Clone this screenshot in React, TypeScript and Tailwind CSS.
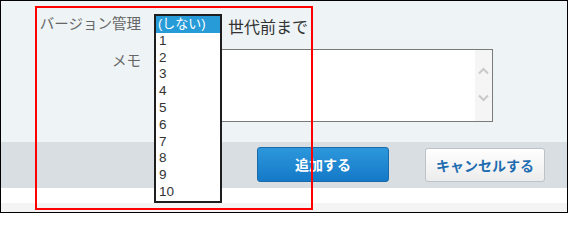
import React from "react";

const items = ["1", "2", "3", "4", "5", "6", "7", "8", "9", "10"];

export default function App() {
  return (
    <div
      className="relative flex h-[213px] w-[568px] flex-col overflow-hidden border border-black bg-[#eef3f6]"
      style={{ fontFamily: '"Noto Sans CJK JP", "Noto Sans", sans-serif' }}
    >
      <div className="flex h-[141px] flex-col">
        <div className="flex h-[48px] items-start pt-[12px]">
          <div className="w-[140px] text-right text-[14.5px] leading-[20px] text-[#666]">
            バージョン管理
          </div>
          <div className="ml-[15px] h-[20px] w-[66px]" />
          <span className="ml-[6px] mt-[2px] text-[16px] leading-[22px] text-[#333]">
            世代前まで
          </span>
        </div>
        <div className="flex items-start">
          <div className="w-[140px] pt-[1px] text-right text-[14.5px] leading-[20px] text-[#666]">
            メモ
          </div>
          <div className="ml-[15px] flex h-[73px] w-[337px] border border-[#7a7a7a] bg-white">
            <textarea className="flex-1 resize-none bg-white outline-none" />
            <div className="flex w-[17px] flex-col items-center bg-[#f5f5f5] pt-[17px]">
              <svg width="11" height="8" viewBox="0 0 11 8" fill="none">
                <path d="M1 6.5 L5.5 2 L10 6.5" stroke="#c9c9c9" strokeWidth="2" />
              </svg>
              <svg className="mt-[19px]" width="11" height="8" viewBox="0 0 11 8" fill="none">
                <path d="M1 1.5 L5.5 6 L10 1.5" stroke="#c9c9c9" strokeWidth="2" />
              </svg>
            </div>
          </div>
        </div>
      </div>
      <div className="flex h-[46px] items-start bg-[#d9dee2] pt-[5px]">
        <button className="ml-[256px] h-[35px] w-[132px] rounded-[3px] border border-[#1b6aa8] bg-gradient-to-b from-[#2c97db] to-[#1479c8] text-[14px] font-bold text-white">
          追加する
        </button>
        <button className="ml-[36px] mt-[1px] h-[34px] w-[120px] rounded-[3px] border border-[#bcc2c7] bg-gradient-to-b from-white to-[#ececec] text-[14px] font-bold text-[#1d6cb0]">
          キャンセルする
        </button>
      </div>
      <div className="h-[15px] bg-white" />
      <div className="flex-1 bg-[#f4f4f4]" />

      <div
        className="absolute left-[153px] top-[13px] w-[68px] border-2 border-[#1e1e1e] bg-white"
        style={{ fontFamily: '"Liberation Sans", "Noto Sans CJK JP", sans-serif' }}
      >
        <div className="h-[16.8px] overflow-hidden bg-[#279bd8] pl-[2px] text-[13px] leading-[16.8px] text-white">
          (しない)
        </div>
        {items.map((n) => (
          <div key={n} className="h-[16.8px] pl-[3px] text-[13.5px] leading-[16.8px] text-[#333]">
            {n}
          </div>
        ))}
      </div>

      <div className="pointer-events-none absolute left-[34px] top-[5px] h-[204px] w-[278px] border-2 border-[#ff0000]" />
    </div>
  );
}
